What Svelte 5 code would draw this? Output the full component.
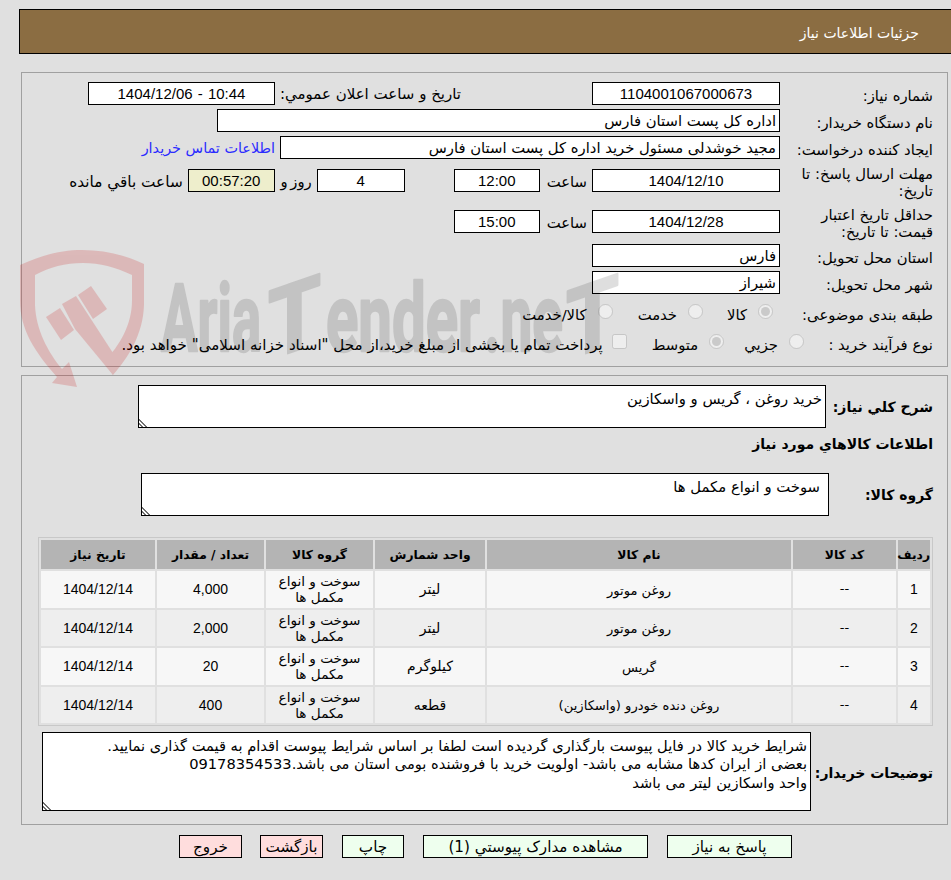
<script>
	const items = [
		{ id: 1, name: 'روغن موتور', unit: 'ليتر', qty: '4,000' },
		{ id: 2, name: 'روغن موتور', unit: 'ليتر', qty: '2,000' },
		{ id: 3, name: 'گريس', unit: 'کيلوگرم', qty: '20' },
		{ id: 4, name: 'روغن دنده خودرو (واسکازين)', unit: 'قطعه', qty: '400' }
	];

	const notes =
		'شرايط خريد کالا در فايل پيوست بارگذاری گرديده است لطفا بر اساس شرايط پيوست اقدام به قيمت گذاری نماييد.\nبعضی از ايران کدها مشابه می باشد- اولويت خريد با فروشنده بومی استان می باشد.09178354533\nواحد واسکازين ليتر می باشد';
</script>

<div class="page" dir="rtl">
	<header class="title">جزئيات اطلاعات نياز</header>

	<section class="panel info">
		<div class="row">
			<span class="label">شماره نياز:</span>
			<div class="field w188 num">1104001067000673</div>
			<span class="public-label">تاريخ و ساعت اعلان عمومي:</span>
			<div class="field w187 num stamp" dir="ltr">1404/12/06 - 10:44</div>
		</div>
		<div class="row">
			<span class="label">نام دستگاه خريدار:</span>
			<div class="field w563 start">اداره کل پست استان فارس</div>
		</div>
		<div class="row">
			<span class="label">ايجاد کننده درخواست:</span>
			<div class="field w500 start">مجيد خوشدلی مسئول خريد اداره کل پست استان فارس</div>
			<a class="contact" href="#contact">اطلاعات تماس خريدار</a>
		</div>
		<div class="row tall deadline">
			<span class="label">مهلت ارسال پاسخ: تا تاريخ:</span>
			<div class="field w188 num">1404/12/10</div>
			<span class="unit">ساعت</span>
			<div class="field w86 num">12:00</div>
			<div class="field w88 num days">4</div>
			<span class="unit days-unit">روز و</span>
			<div class="field w87 num timer">00:57:20</div>
			<span class="unit remaining">ساعت باقي مانده</span>
		</div>
		<div class="row tall validity">
			<span class="label">حداقل تاريخ اعتبار قيمت: تا تاريخ:</span>
			<div class="field w188 num">1404/12/28</div>
			<span class="unit">ساعت</span>
			<div class="field w86 num">15:00</div>
		</div>
		<div class="row">
			<span class="label">استان محل تحويل:</span>
			<div class="field w188 start">فارس</div>
		</div>
		<div class="row">
			<span class="label">شهر محل تحويل:</span>
			<div class="field w188 start">شيراز</div>
		</div>
		<div class="row choices category">
			<span class="label">طبقه بندی موضوعی:</span>
			<label><input type="radio" disabled checked />کالا</label>
			<label><input type="radio" disabled />خدمت</label>
			<label><input type="radio" disabled />کالا/خدمت</label>
		</div>
		<div class="row choices process">
			<span class="label">نوع فرآيند خريد :</span>
			<label><input type="radio" disabled />جزيي</label>
			<label><input type="radio" disabled checked />متوسط</label>
			<label><input type="checkbox" disabled />پرداخت تمام يا بخشی از مبلغ خريد،از محل "اسناد خزانه اسلامی" خواهد بود.</label>
		</div>
	</section>

	<section class="panel detail">
		<div class="block summary">
			<strong>شرح کلي نياز:</strong>
			<textarea readonly>خريد روغن ، گريس و واسکازين</textarea>
		</div>
		<h2>اطلاعات کالاهاي مورد نياز</h2>
		<div class="block group">
			<strong>گروه کالا:</strong>
			<textarea readonly>سوخت و انواع مکمل ها</textarea>
		</div>

		<table>
			<colgroup>
				<col style="width: 32px" />
				<col style="width: 103px" />
				<col style="width: 304px" />
				<col style="width: 110px" />
				<col style="width: 107px" />
				<col style="width: 107px" />
				<col style="width: 114px" />
			</colgroup>
			<thead>
				<tr>
					<th>رديف</th>
					<th>کد کالا</th>
					<th>نام کالا</th>
					<th>واحد شمارش</th>
					<th>گروه کالا</th>
					<th>تعداد / مقدار</th>
					<th>تاريخ نياز</th>
				</tr>
			</thead>
			<tbody>
				{#each items as item}
					<tr>
						<td class="num">{item.id}</td>
						<td>--</td>
						<td class="name">{item.name}</td>
						<td class="measure">{item.unit}</td>
						<td class="goods">سوخت و انواع مکمل ها</td>
						<td class="num">{item.qty}</td>
						<td class="num">1404/12/14</td>
					</tr>
				{/each}
			</tbody>
		</table>

		<div class="block notes">
			<strong>توضيحات خريدار:</strong>
			<textarea readonly>{notes}</textarea>
		</div>
	</section>

	<div class="actions">
		<button class="go wide">پاسخ به نياز</button>
		<button class="go wider">مشاهده مدارک پيوستي (1)</button>
		<button class="go print">چاپ</button>
		<button class="stop">بازگشت</button>
		<button class="stop last">خروج</button>
	</div>

	<!-- translucent stamp, lies over the form -->
	<svg class="watermark" width="951" height="880" viewBox="0 0 951 880" aria-hidden="true">
		<g fill="rgb(200,0,0)" opacity="0.174">
			<path d="M20 265 C45 254 62 250 82 250 C105 250 125 255 144 264 L144 305 C143 335 128 358 113 375 L104 362 C120 345 132 325 132 300 L132 275 C115 267 100 263 83 263 C65 263 50 267 35 275 L35 305 C36 330 48 352 62 369 L69 362 L77 387 L52 383 L57 377 C35 352 20 330 20 300 Z" />
			<polygon points="46,317 60,308 74,330 61,340" />
			<polygon points="62,304 76,296 113,353 113,375 75,329" />
			<polygon points="78,295 91,286 107,309 93,319" />
		</g>
		<g class="wm-text" opacity="0.125">
			<text x="161" y="351" textLength="100" lengthAdjust="spacingAndGlyphs">Aria</text>
			<text transform="translate(268 351) skewY(-19)" y="9" font-size="96" textLength="53" lengthAdjust="spacingAndGlyphs">T</text>
			<text x="326" y="351" textLength="154" lengthAdjust="spacingAndGlyphs">ender</text>
			<text x="484" y="351" textLength="79" lengthAdjust="spacingAndGlyphs">.ne</text>
			<text transform="translate(566 351) skewY(-19)" y="9" font-size="96" textLength="53" lengthAdjust="spacingAndGlyphs">T</text>
		</g>
	</svg>
</div>

<style>
	:global(body) {
		margin: 0;
		background: #e0e0e0;
	}

	.page {
		position: relative;
		width: 951px;
		height: 880px;
		overflow: hidden;
		font-family: 'DejaVu Sans', sans-serif;
		font-size: 14.8px;
		color: #000;
		padding-top: 9px;
		box-sizing: border-box;
	}

	.watermark {
		position: absolute;
		top: 0;
		left: 0;
		z-index: 2;
		direction: ltr;
		pointer-events: none;
	}

	.wm-text {
		direction: ltr;
		unicode-bidi: isolate;
		font-family: Roboto, sans-serif;
		font-weight: 700;
		font-size: 95px;
		fill: #000;
		stroke: #000;
		stroke-width: 2.5;
		stroke-linejoin: round;
	}

	.title {
		position: relative;
		height: 45px;
		margin-left: 19px;
		padding-right: 32px;
		box-sizing: border-box;
		background: #8b6d42;
		border: 1px solid #000;
		border-right: 0;
		color: #fff;
		font-size: 14px;
		line-height: 46px;
	}

	.panel {
		position: relative;
		width: 927px;
		margin-right: 3px;
		box-sizing: border-box;
		border: 1px solid #a0a0a0;
	}

	.info {
		height: 295px;
		margin-top: 18px;
		padding: 9px 14px 0 0;
	}

	.row {
		display: flex;
		align-items: center;
		height: 27px;
	}

	.label {
		flex: none;
		width: 153px;
	}

	.field {
		flex: none;
		box-sizing: border-box;
		height: 23px;
		line-height: 21px;
		border: 1px solid #000;
		background: #fff;
		text-align: center;
		margin-bottom: 4px;
		white-space: nowrap;
		overflow: hidden;
	}

	.start {
		text-align: right;
		padding-right: 3px;
	}

	.num {
		font-family: 'Liberation Sans', sans-serif;
		font-size: 15px;
	}

	.stamp {
		word-spacing: 1px;
	}

	.w86 { width: 86px; }
	.w87 { width: 87px; }
	.w88 { width: 88px; }
	.w187 { width: 187px; }
	.w188 { width: 188px; }
	.w500 { width: 500px; }
	.w563 { width: 563px; }

	.public-label {
		flex: none;
		width: 186px;
		margin: 0 131px 4px 0;
		white-space: nowrap;
		font-size: 15px;
	}

	.contact {
		margin: 0 5px 4px 0;
		color: #2b2bff;
		font-size: 14.4px;
		text-decoration: none;
		white-space: nowrap;
	}

	.tall {
		height: 40px;
	}

	.tall .label {
		line-height: 17px;
	}

	.deadline {
		margin-top: -1px;
	}

	.validity {
		margin: 1px 0;
	}

	.unit {
		margin: 0 5px 1px 7px;
		white-space: nowrap;
	}

	.days {
		margin-right: 49px;
	}

	.days-unit {
		flex: none;
		width: 32px;
		margin-left: 5px;
		word-spacing: -2px;
	}

	.remaining {
		font-size: 15.3px;
	}

	.timer {
		background: #eeeecc;
	}

	.choices {
		height: 29px;
	}

	.category {
		margin-top: 2px;
	}

	.process {
		margin-top: 1px;
	}

	.choices label {
		display: flex;
		align-items: center;
		white-space: nowrap;
	}

	.choices input {
		width: 15px;
		height: 15px;
		margin: 0 0 6px 11px;
	}

	.category label { margin-right: 25px; }
	.category label:nth-of-type(1) { margin-right: 7px; }
	.category label:nth-of-type(2) { margin-right: 24px; }

	.process label { margin-right: 25px; font-size: 15.1px; }
	.process label:nth-of-type(1) { margin-right: -24px; font-size: 14.8px; }
	.process label:nth-of-type(2) { margin-right: 20px; font-size: 14.8px; }
	.process input[type='checkbox'] { margin-left: 9px; }

	.detail {
		height: 450px;
		margin-top: 8px;
	}

	.block {
		position: absolute;
		right: 14px;
	}

	.block strong {
		position: absolute;
		right: 0;
		white-space: nowrap;
		font-size: 14px;
	}

	.detail h2 {
		position: absolute;
		top: 60px;
		right: 14px;
		margin: 0;
		font-size: 14px;
	}

	textarea {
		position: absolute;
		box-sizing: border-box;
		margin: 0;
		padding: 4px 3px 3px;
		border: 1px solid #000;
		border-radius: 0;
		outline: none;
		background: #fff;
		font: inherit;
		line-height: 18.4px;
		color: #000;
	}

	textarea::-webkit-resizer {
		background:
			linear-gradient(to top right, transparent 32%, #fff 32%),
			repeating-linear-gradient(45deg, #fff 0 1.6px, #707070 1.6px 3px);
	}

	.summary { top: 9px; left: 0; height: 43px; }
	.summary strong { top: 14px; }
	.summary textarea { right: 107px; width: 688px; height: 43px; }

	.group { top: 97px; left: 0; height: 43px; }
	.group strong { top: 14px; }
	.group textarea { right: 104px; width: 688px; height: 43px; padding-right: 8px; }

	.notes { top: 356px; left: 0; height: 79px; }
	.notes strong { top: 33px; }
	.notes textarea { right: 122px; width: 769px; height: 79px; font-size: 14.65px; }

	table {
		position: absolute;
		top: 161px;
		left: 16px;
		width: 895px;
		table-layout: fixed;
		border: 1px solid #c8c8c8;
		border-collapse: separate;
		border-spacing: 2px;
	}

	th {
		height: 29px;
		padding: 0;
		background: #b4b4b4;
		font-size: 12.3px;
		font-weight: 700;
	}

	td {
		height: 36.5px;
		padding: 0 8px;
		text-align: center;
		line-height: 16px;
		font-size: 13px;
	}

	td.name { font-size: 13.1px; padding-top: 3px; height: 33.5px; }
	td.measure { font-size: 14px; }
	td.goods { font-size: 13.6px; }

	td.num {
		font-size: 14px;
	}

	tbody tr:nth-child(odd) td { background: #f7f7f7; }
	tbody tr:nth-child(even) td { background: #eeeeee; }

	.actions {
		position: absolute;
		top: 835px;
		right: 159px;
		display: flex;
		gap: 19px;
	}

	button {
		box-sizing: border-box;
		width: 63px;
		height: 23px;
		padding: 0;
		border: 1px solid #000;
		border-radius: 0;
		font: inherit;
		font-size: 15.2px;
		color: #000;
	}

	.go { background: #eeffee; }
	.stop { background: #ffdddd; }
	.wide { width: 125px; }
	.wider { width: 225px; }
	.print { width: 62px; }
	.last { margin-right: -1px; }
</style>
